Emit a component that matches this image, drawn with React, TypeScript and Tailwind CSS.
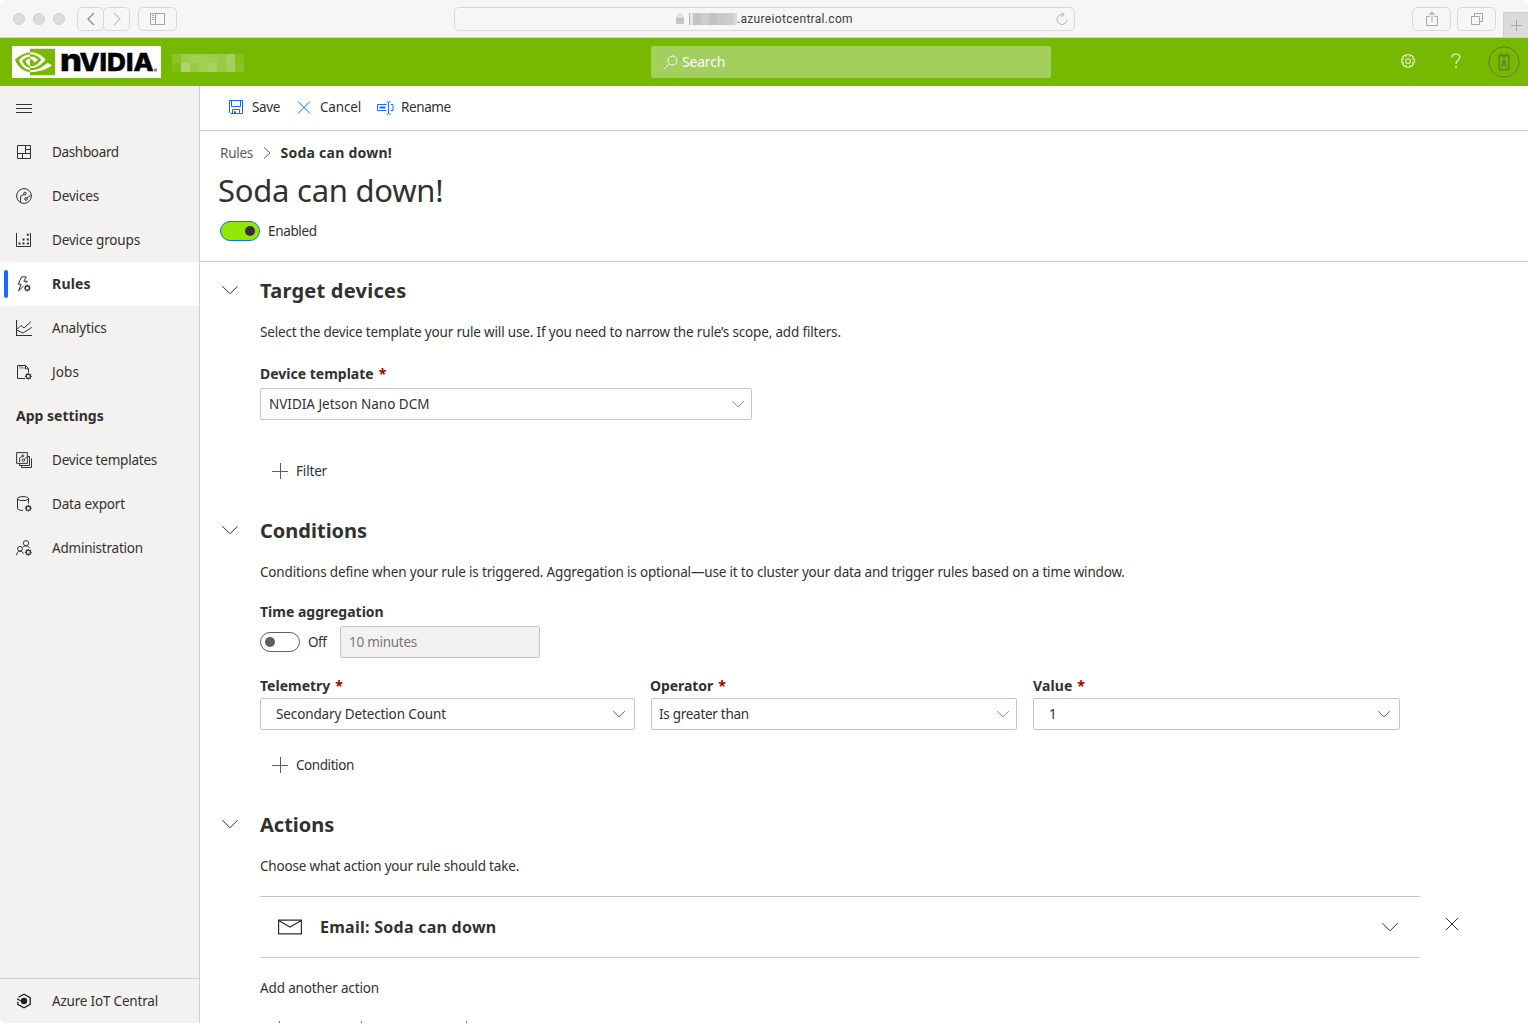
import React from "react";
import { SiNvidia } from "react-icons/si";

type Box = { className?: string; children?: React.ReactNode };

function Icon({ className = "", children }: Box) {
  return (
    <svg
      viewBox="0 0 16 16"
      width="16"
      height="16"
      fill="none"
      stroke="currentColor"
      strokeWidth="1"
      className={`shrink-0 ${className}`}
    >
      {children}
    </svg>
  );
}

/* Small cog used in the corner of several navigation icons. */
function Cog({ x = 12.5, y = 12.5 }: { x?: number; y?: number }) {
  return (
    <g transform={`translate(${x} ${y})`}>
      <circle r="2.1" strokeWidth="1.2" />
      <path d="M0-2v-1.400M0 2v1.400M-2 0h-1.400M2 0h1.400M-1.400-1.400l-1-1M1.400 1.400l1 1M-1.400 1.400l-1 1M1.400-1.400l1-1" strokeWidth="1.200" />
    </g>
  );
}

const icons = {
  dashboard: (
    <Icon>
      <path d="M1.5 1.5h13v13h-13zM9.5 1.5v8M1.5 9.5h13M9.5 5.5h5M6.5 9.5v5" />
    </Icon>
  ),
  devices: (
    <Icon>
      <circle cx="8" cy="8" r="7.4" />
      <circle cx="9" cy="5.5" r="1.3" />
      <circle cx="10" cy="11" r="1.3" />
      <path d="M8 6.4 4.6 8.2v5.6M11 10l3.8-3" />
    </Icon>
  ),
  groups: (
    <Icon>
      <path d="M.5 1v13.5h14V1" />
      <path d="M2.500 11.500h2M6.500 11.500h2M10.800 11.500h2M6.500 7.500h2M10.800 7.500h2M10.800 2.800h2" strokeWidth="2" />
    </Icon>
  ),
  rules: (
    <Icon>
      <path d="M5.500.9h4.800L7.800 5.200h3.600M5.500.9 2.300 8.200h2.900L2.600 14.800 7.600 10M11.400 5.200 9.600 7.200" />
      <Cog x={11.3} y={12} />
    </Icon>
  ),
  analytics: (
    <Icon>
      <path d="M.5 0v15.5H16" strokeWidth="1.200" />
      <path d="m1 9.400 4-4 3 2.600 7-6.400M1 10.400l6 2.600 8.800-5.600" />
    </Icon>
  ),
  jobs: (
    <Icon>
      <path d="M9 14.500H1.500v-13h8l3 3v4M9.500 1.500v3.400h3" />
      <path d="M3.500 4h1M5.500 4h1M7.500 4h1M3.500 2.800h1M5.500 2.800h1" />
      <Cog x={12.3} y={12.3} />
    </Icon>
  ),
  templates: (
    <Icon>
      <path d="M.6.6h10.800v10.800H.6z" />
      <circle cx="6.800" cy="3.800" r="1" />
      <circle cx="7.400" cy="8.200" r="1.200" />
      <path d="M6 4.400 3.600 6.200v4M8.200 7.400l2.600-2.400M3.500 11.500v2h10v-9.300M5.500 13.500v2h10V6.500M11.500 4.500h2" />
    </Icon>
  ),
  database: (
    <Icon>
      <ellipse cx="7" cy="2.600" rx="5.500" ry="2" />
      <path d="M1.500 2.600v9.800c0 1 2 2 5.500 2M12.500 2.600v5" />
      <Cog x={12.3} y={12.2} />
    </Icon>
  ),
  admin: (
    <Icon>
      <circle cx="10" cy="3.200" r="2.600" />
      <circle cx="4" cy="8.800" r="2.400" />
      <path d="M.6 15.200c0-2.400 1.500-4 3.400-4s3 1.200 3.400 2.600M6.800 7.400c.6-1 1.800-1.600 3.200-1.600 1.700 0 2.900.8 3.600 2.200" />
      <Cog x={12.3} y={12.3} />
    </Icon>
  ),
  central: (
    <Icon className="text-[#201f1e]">
      <path d="M2.500 4.200 8 1.200l6.200 3.400v6.800L8 14.800l-6.200-3.400V8.800" strokeWidth="1.300" />
      <circle cx="8" cy="8" r="3.200" fill="currentColor" stroke="none" />
      <path d="M1 5.800 5 8" strokeWidth="1.200" />
    </Icon>
  ),
};

function NavItem({ icon, label, active, className = "" }: { icon: React.ReactNode; label: string; active?: boolean; className?: string }) {
  return (
    <div className={`flex h-11 items-center pl-1 ${active ? "bg-white font-bold" : ""}`}>
      <span className={`h-7 w-1 rounded-sm ${active ? "bg-[#136bfb]" : ""}`} />
      <span className="ml-2 flex w-9 text-[#323130]">{icon}</span>
      <span className={className}>{label}</span>
    </div>
  );
}

function Chevron({ size = 16, className = "" }: { size?: number; className?: string }) {
  return (
    <svg viewBox="0 0 16 8" width={size} height={size / 2} fill="none" stroke="currentColor" className={`shrink-0 overflow-visible ${className}`}>
      <path d="M.4.2 8 7.8 15.600.2" vectorEffect="non-scaling-stroke" />
    </svg>
  );
}

function Select({ value, className = "", chevron = "text-[#605e5c]", text = "" }: { value: string; className?: string; chevron?: string; text?: string }) {
  return (
    <div className={`flex h-8 items-center justify-between rounded-xs border border-[#c8c6c4] bg-white ${className}`}>
      <span className={text}>{value}</span>
      <Chevron size={12} className={chevron} />
    </div>
  );
}

function Label({ children, required, className = "" }: Box & { required?: boolean }) {
  return (
    <div className="flex h-5 items-center gap-[5px] pb-[2px] text-[14px] font-bold whitespace-nowrap">
      <span className={className}>{children}</span>
      {required && <span className="text-[#a80000]">*</span>}
    </div>
  );
}

function SectionHead({ title, className = "" }: { title: string; className?: string }) {
  return (
    <div className="flex h-[58px] items-center pl-[22px]">
      <Chevron className="mb-[2px]" />
      <h2 className={`ml-[22px] text-[20px] font-bold ${className}`}>{title}</h2>
    </div>
  );
}

function AddButton({ label, className }: { label: string; className: string }) {
  return (
    <div className="ml-3 flex h-10 items-center gap-2">
      <Icon className="text-[#605e5c]">
        <path d="M8.500 0v16M0 8.500h16" />
      </Icon>
      <span className={className}>{label}</span>
    </div>
  );
}

function ChromeButton({ className = "", children }: Box) {
  return <div className={`flex h-6 items-center justify-center rounded-[5px] border border-[#d9d9d9] text-[#a5a5a5] ${className}`}>{children}</div>;
}

function BrowserBar() {
  return (
    <div className="flex h-[38px] items-start rounded-t-md border-b border-[#d0d0d0] bg-[#f6f6f6] pl-[13px]">
      <div className="mt-[13px] flex gap-2">
        <span className="h-3 w-3 rounded-full border border-[#d0d0d0] bg-[#dcdcdc]" />
        <span className="h-3 w-3 rounded-full border border-[#d0d0d0] bg-[#dcdcdc]" />
        <span className="h-3 w-3 rounded-full border border-[#d0d0d0] bg-[#dcdcdc]" />
      </div>
      <ChromeButton className="mt-[7px] ml-3 w-[27px]">
        <svg width="8" height="14" fill="none" stroke="#8c8c8c" strokeWidth="1.3"><path d="M7 1 1 7l6 6" /></svg>
      </ChromeButton>
      <ChromeButton className="mt-[7px] -ml-px w-[27px]">
        <svg width="8" height="14" fill="none" stroke="#c6c6c6" strokeWidth="1.3"><path d="m1 1 6 6-6 6" /></svg>
      </ChromeButton>
      <ChromeButton className="mt-[7px] ml-2 w-[39px]">
        <svg width="15" height="12" fill="none" stroke="currentColor"><path d="M.5.5h14v11H.5zM5.500.5v11M2 2.500h2M2 4.500h2M2 6.500h2" /></svg>
      </ChromeButton>
      <div className="mt-[7px] ml-[277px] flex h-6 w-[621px] items-center rounded-[5px] border border-[#d9d9d9]">
        <svg width="8" height="11" className="mb-px ml-[221px]"><path d="M2 5V3a2 2 0 0 1 4 0v2" fill="none" stroke="#c4c4c4" /><path d="M0 4.500h8V11H0z" fill="#c4c4c4" /></svg>
        <div className="ml-[5px] flex h-3 w-12">
          <span className="w-px bg-[#b0b0b0]" />
          <span className="w-[3px] bg-[#e6e6e6]" />
          <span className="w-2 bg-[#c4c4c4]" />
          <span className="w-2 bg-[#cfcfcf]" />
          <span className="w-2 bg-[#c2c2c2]" />
          <span className="w-2 bg-[#c8c8c8]" />
          <span className="w-2 bg-[#cccccc]" />
          <span className="w-1 bg-[#d8d8d4]" />
        </div>
        <span className="font-['Roboto',sans-serif] text-[12px] tracking-[0.32px] text-[#3c3c3c]">.azureiotcentral.com</span>
        <svg width="14" height="15" className="mr-[5px] mb-px ml-auto" fill="none" stroke="#b0b0b0"><path d="M8.500 3.500H7a5 5 0 1 0 5 5M6.500 1l2.500 2.500L6.500 6" /></svg>
      </div>
      <ChromeButton className="mt-[7px] ml-[337px] w-[39px]">
        <svg width="12" height="16" fill="none" stroke="currentColor" className="mb-px"><path d="M3.500 5.500h-3v9h11v-9h-3M6 11V1M3 4l3-3 3 3" /></svg>
      </ChromeButton>
      <ChromeButton className="mt-[7px] ml-1.5 w-[39px]">
        <svg width="12" height="12" fill="none" stroke="currentColor"><path d="M.5 3.500h8v8h-8zM3.500 3.500v-3h8v8h-3" /></svg>
      </ChromeButton>
      <div className="mt-3 ml-[7px] flex h-[25px] w-[25px] items-center justify-center border-t border-l border-[#cfcfcf] bg-[#dbdbdb] text-[#a5a5a5]">
        <svg width="11" height="11" stroke="currentColor"><path d="M5.500 0v11M0 5.500h11" /></svg>
      </div>
    </div>
  );
}

function Logo() {
  return (
    <div className="flex h-8 w-[149px] items-center bg-white pl-[3px]">
      <SiNvidia className="h-10 w-10 shrink-0 text-[#76b900]" />
      <svg width="100" height="32" viewBox="0 0 100 32" className="ml-[5px] overflow-visible" fill="#000" stroke="#000" strokeWidth="0.500" fontFamily="Inter, sans-serif" fontWeight="800">
        <text x="0" y="25" fontSize="31" textLength="22" lengthAdjust="spacingAndGlyphs">n</text>
        <text x="19.500" y="25" fontSize="24.500" textLength="74" lengthAdjust="spacingAndGlyphs">VIDIA</text>
        <circle cx="95.500" cy="24" r="1.800" fill="#8a8a8a" stroke="none" />
      </svg>
    </div>
  );
}

function Header() {
  return (
    <header className="flex h-12 items-center bg-[#76b900] pl-3">
      <Logo />
      <div className="mt-[2px] ml-[11px] grid h-[18px] w-[72px] grid-cols-8">
        <span className="bg-[#8ac52d]" /><span className="bg-[#9ccd4c]" /><span className="bg-[#a1d055]" /><span className="bg-[#a0cf53]" />
        <span className="bg-[#9ccd4c]" /><span className="bg-[#98cb45]" /><span className="bg-[#a3d15a]" /><span className="bg-[#83c21d]" />
        <span className="bg-[#7fbf14]" /><span className="bg-[#acd669]" /><span className="bg-[#98cb45]" /><span className="bg-[#a0cf53]" />
        <span className="bg-[#a6d35e]" /><span className="bg-[#98cb45]" /><span className="bg-[#a2d058]" /><span className="bg-[#88c428]" />
      </div>
      <div className="ml-[407px] flex h-8 w-[400px] items-center rounded-xs bg-[#a2cf5e] pl-3 text-white">
        <svg width="15" height="15" fill="none" stroke="white"><circle cx="9.500" cy="5.500" r="4.500" /><path d="M6.300 8.700.5 14.500" /></svg>
        <span className="mb-[2px] ml-1 text-[14px] tracking-[-0.2px]">Search</span>
      </div>
      <svg width="16" height="16" viewBox="-8 -8 16 16" className="-mt-[2px] ml-[349px]" fill="none" stroke="#eaf5d2" strokeWidth="1.100">
        <circle r="2.300" />
        <path d="M-1.400-6.500h2.800l.5 1.700 1.600-.9 2 2-.9 1.600 1.900.7v2.800l-1.900.5.9 1.600-2 2-1.600-.9-.5 1.900h-2.800l-.5-1.900-1.600.9-2-2 .9-1.600-1.700-.5v-2.800l1.700-.7-.9-1.600 2-2 1.600.9z" />
      </svg>
      <svg width="10" height="16" viewBox="0 0 10 16" className="-mt-[2px] ml-[35px]" fill="none" stroke="#eaf5d2" strokeWidth="1.200">
        <path d="M1 4.500C1 2.300 2.700 1 5 1s3.900 1.300 3.900 3.300C8.900 7 5 7.300 5 11M5 13v2" />
      </svg>
      <svg width="32" height="32" viewBox="0 0 32 32" className="ml-[27px]" fill="none" stroke="#5f7f28">
        <circle cx="16" cy="16" r="15.200" />
        <path d="M11 9.500h10v14H11z" strokeWidth="1.300" />
        <path d="m13 7 3 4 3-4M13.500 21l2.500-7 2.500 7M14.200 18.500h3.600" strokeWidth="1.300" />
      </svg>
    </header>
  );
}

function Sidebar() {
  return (
    <nav className="flex w-[200px] shrink-0 flex-col rounded-bl-md border-r border-[#d2d0ce] bg-[#f3f2f1]">
      <div className="flex h-11 items-center pl-4">
        <Icon><path d="M0 4.500h16M0 8.500h16M0 12.500h16" /></Icon>
      </div>
      <NavItem icon={icons.dashboard} label="Dashboard" className="tracking-[-0.34px]" />
      <NavItem icon={icons.devices} label="Devices" className="tracking-[-0.16px]" />
      <NavItem icon={icons.groups} label="Device groups" className="tracking-[-0.16px]" />
      <NavItem icon={icons.rules} label="Rules" active className="mb-[2px] text-[14px] tracking-[0.2px]" />
      <NavItem icon={icons.analytics} label="Analytics" className="tracking-[-0.19px]" />
      <NavItem icon={icons.jobs} label="Jobs" className="tracking-[0.1px]" />
      <div className="flex h-11 items-center pb-[2px] pl-4 text-[14px] font-bold">App settings</div>
      <NavItem icon={icons.templates} label="Device templates" className="tracking-[-0.22px]" />
      <NavItem icon={icons.database} label="Data export" className="tracking-[-0.17px]" />
      <NavItem icon={icons.admin} label="Administration" className="tracking-[-0.22px]" />
      <div className="mt-auto border-t border-[#d2d0ce]">
        <NavItem icon={icons.central} label="Azure IoT Central" className="tracking-[-0.19px]" />
      </div>
    </nav>
  );
}

function Toolbar() {
  return (
    <div className="flex h-[45px] items-center border-b border-[#c8c6c4] pb-[2px] pl-7">
      <Icon className="text-[#136bfb]">
        <path d="M1.500 1.500h13v13H3l-1.500-1.500zM3.500 1.500v6h9v-6M4.500 14.500v-4h7v4M6.500 14.500v-2h1v2" />
      </Icon>
      <span className="ml-2 w-11 tracking-[-0.35px]">Save</span>
      <Icon className="text-[#136bfb]"><path d="m2 2.500 12 12M14 2.500l-12 12" /></Icon>
      <span className="ml-2 w-[57px] tracking-[-0.17px]">Cancel</span>
      <svg width="17" height="14" viewBox="0 0 17 14" fill="none" stroke="#136bfb" className="mt-px">
        <path d="M9.500 3.500h-9v6h9M14 3.500h2v6h-2M11.500 1.500v11M9.500.8c1.200 0 2 .3 2 1 0-.7.800-1 2-1M9.500 13.200c1.200 0 2-.3 2-1 0 .7.800 1 2 1" />
        <path d="M2.500 6.500h6" strokeWidth="2" />
      </svg>
      <span className="ml-[7px] tracking-[-0.4px]">Rename</span>
    </div>
  );
}

function PageHead() {
  return (
    <div className="h-[131px] border-b border-[#c8c6c4] pt-3 pl-5">
      <div className="flex h-5 items-center">
        <span className="w-[43px] tracking-[-0.26px] text-[#605e5c]">Rules</span>
        <svg width="8" height="12" fill="none" stroke="#605e5c"><path d="m1 .5 6 5.500-6 5.500" /></svg>
        <span className="mb-[2px] ml-[9.500px] text-[14px] font-bold tracking-[0.25px]">Soda can down!</span>
      </div>
      <h1 className="-ml-[2px] flex h-14 items-center pb-[2px] text-[31px] tracking-[-0.25px]">Soda can down!</h1>
      <div className="mt-[2px] flex items-center">
        <span className="flex h-5 w-10 items-center justify-end rounded-full border border-[#136bfb] bg-[#93e800] pr-1">
          <span className="h-[10px] w-[10px] rounded-full bg-[#323130]" />
        </span>
        <span className="ml-2 tracking-[-0.34px]">Enabled</span>
      </div>
    </div>
  );
}

function Rule() {
  return (
    <main className="flex-1 overflow-hidden">
      <SectionHead title="Target devices" className="tracking-[0.25px]" />
      <div className="pl-[60px]">
        <p className="flex h-6 items-center tracking-[-0.17px]">Select the device template your rule will use. If you need to narrow the rule’s scope, add filters.</p>
        <div className="mt-5"><Label required>Device template</Label></div>
        <Select value="NVIDIA Jetson Nano DCM" className="mt-1 w-[492px] pr-[7px] pl-2" text="tracking-[-0.01px]" chevron="text-[#8a8886]" />
        <div className="mt-[31px]"><AddButton label="Filter" className="tracking-[-0.17px]" /></div>
      </div>

      <div className="mt-[11px]"><SectionHead title="Conditions" /></div>
      <div className="pl-[60px]">
        <p className="flex h-6 items-center tracking-[-0.17px]">
          Conditions define when your rule is triggered. Aggregation is optional—use it to cluster your data and trigger rules based on a time window.
        </p>
        <div className="mt-[18px]"><Label>Time aggregation</Label></div>
        <div className="mt-1 flex h-8 items-center">
          <span className="flex h-5 w-10 items-center rounded-full border border-[#605e5c] pl-1">
            <span className="h-[10px] w-[10px] rounded-full bg-[#605e5c]" />
          </span>
          <span className="ml-2 w-8 tracking-[-0.5px]">Off</span>
          <span className="flex h-8 w-[200px] items-center rounded-xs border border-[#c8c6c4] bg-[#f3f2f1] pl-2 tracking-[-0.27px] text-[#797775]">10 minutes</span>
        </div>
        <div className="mt-[18px] flex gap-4">
          <div className="w-[375px]">
            <Label required>Telemetry</Label>
            <Select value="Secondary Detection Count" className="mt-[2px] pr-[9px] pl-[15px]" text="tracking-[-0.12px]" />
          </div>
          <div className="w-[366px]">
            <Label required className="-ml-px tracking-[-0.06px]">Operator</Label>
            <Select value="Is greater than" className="mt-[2px] pr-[7px] pl-[7px]" text="tracking-[-0.28px]" chevron="text-[#8a8886]" />
          </div>
          <div className="w-[367px]">
            <Label required className="tracking-[0.1px]">Value</Label>
            <Select value="1" className="mt-[2px] pr-[9px] pl-[15px]" />
          </div>
        </div>
        <div className="mt-[15px]"><AddButton label="Condition" className="tracking-[-0.43px]" /></div>
      </div>

      <div className="mt-[11px]"><SectionHead title="Actions" /></div>
      <div className="pl-[60px]">
        <p className="flex h-6 items-center tracking-[-0.185px]">Choose what action your rule should take.</p>
        <div className="mt-[18px] flex items-center">
          <div className="flex h-[62px] w-[1160px] items-center border-y border-[#c8c6c4] pl-[18px]">
            <svg width="24" height="16" fill="none" stroke="#323130" strokeWidth="1.200">
              <path d="M.6 1.100h22.800v13.800H.6zM.6 1.500 12 8 23.400 1.500" />
            </svg>
            <span className="ml-[18px] text-[16px] font-bold tracking-[0.26px]">Email: Soda can down</span>
            <Chevron className="mr-[22px] ml-auto" />
          </div>
          <svg width="12" height="12" className="mb-[6px] ml-[26px]" stroke="#323130"><path d="m0 0 12 12M12 0 0 12" /></svg>
        </div>
        <p className="mt-5 flex h-5 items-center tracking-[-0.15px]">Add another action</p>
        {/* Tops of the next row of text, cut off by the window edge */}
        <div className="mt-[23px] flex h-[2px] pl-[19px]">
          <span className="w-px bg-[#7a7978]" />
          <span className="ml-[81px] w-px bg-[#7a7978]" />
          <span className="ml-[104px] w-px bg-[#7a7978]" />
        </div>
      </div>
    </main>
  );
}

export default function App() {
  return (
    <div className="flex h-[1023px] w-[1528px] flex-col overflow-hidden bg-white font-['Noto_Sans',sans-serif] text-[13.5px] text-[#323130]">
      <BrowserBar />
      <Header />
      <div className="flex min-h-0 flex-1">
        <Sidebar />
        <div className="flex min-w-0 flex-1 flex-col">
          <Toolbar />
          <PageHead />
          <Rule />
        </div>
      </div>
    </div>
  );
}
